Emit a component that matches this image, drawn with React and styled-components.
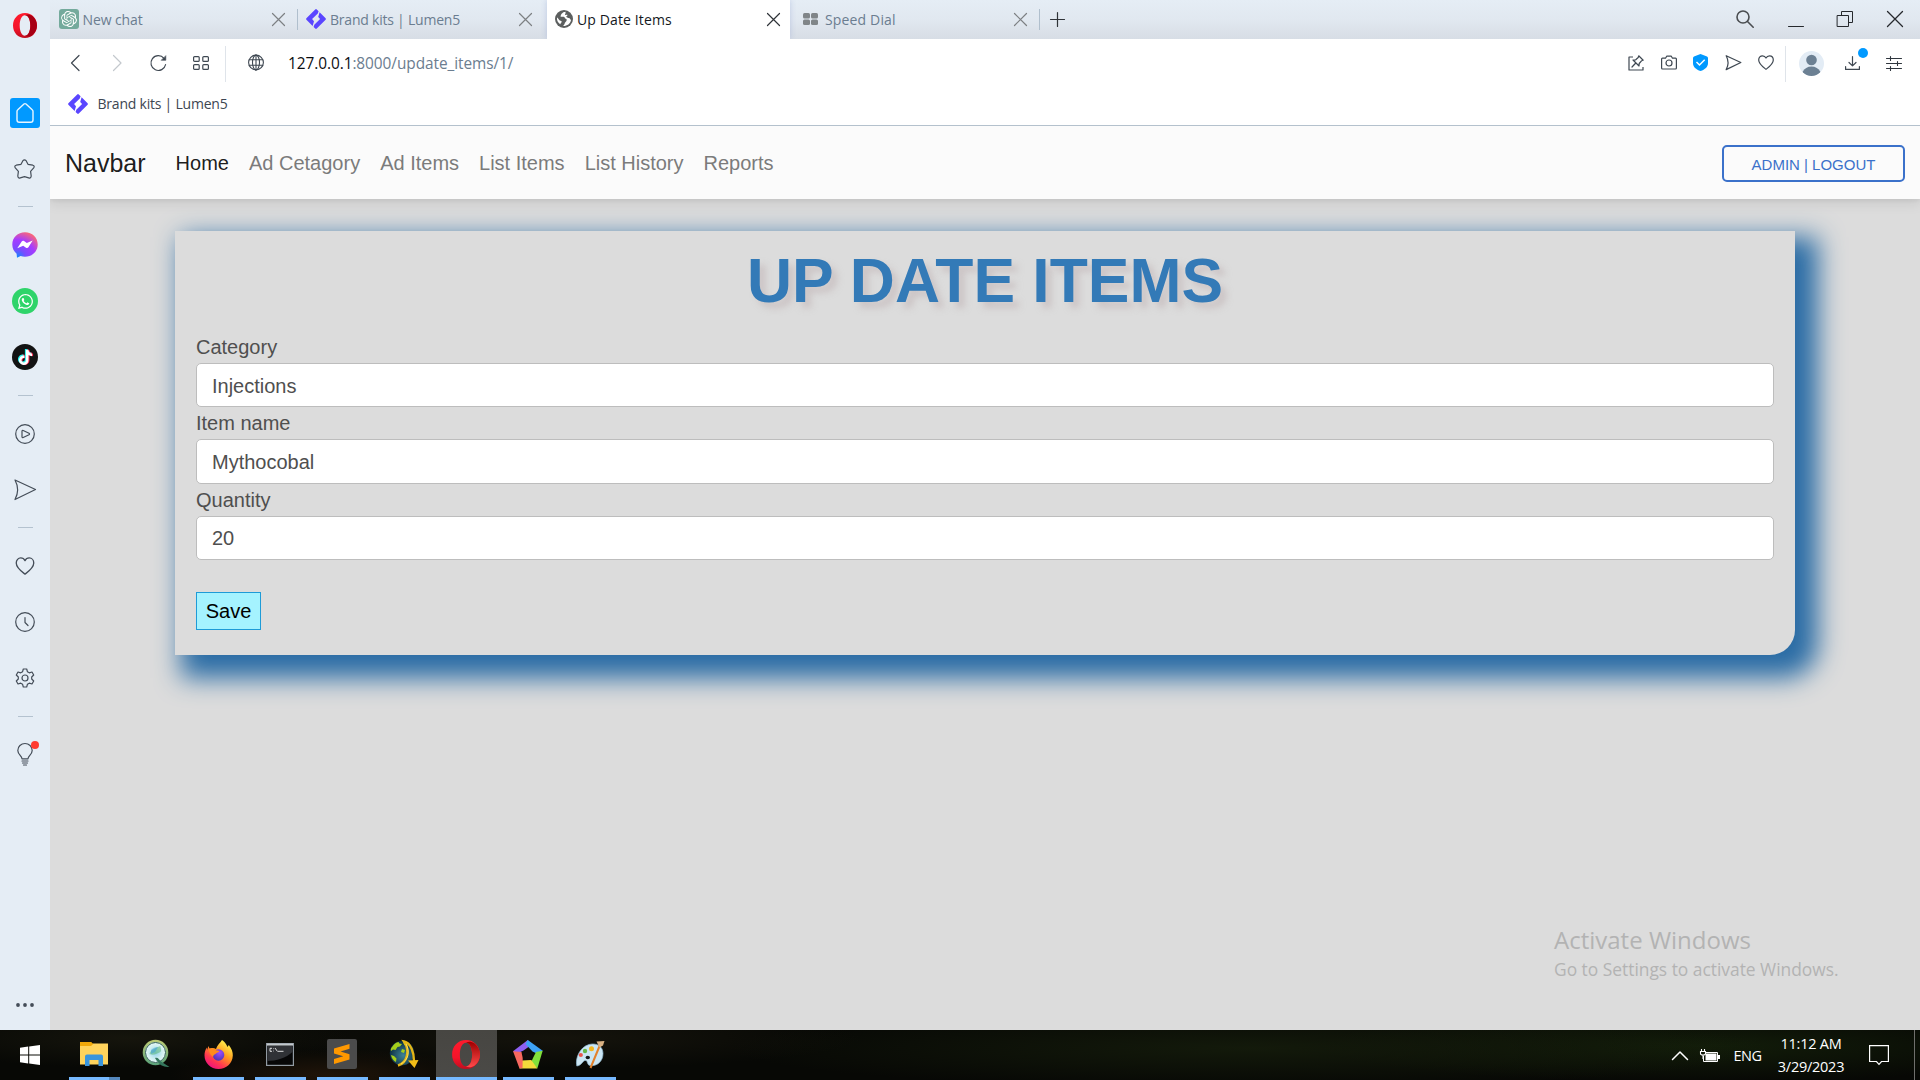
import React from "react";
import styled, { createGlobalStyle, css } from "styled-components";
import { SiOpenai } from "react-icons/si";
import { FaWhatsapp, FaTiktok } from "react-icons/fa";

const Global = createGlobalStyle`
  *, *::before, *::after { box-sizing: border-box; }
  html, body { margin: 0; padding: 0; height: 100%; overflow: hidden; }
  #root { height: 100%; }
  body { font-family: "Liberation Sans", Arial, sans-serif; }
  svg { display: block; flex: none; overflow: visible; }
`;

const uiFont = css`
  font-family: "Open Sans", "Noto Sans", sans-serif;
`;

const Screen = styled.div`
  width: 1920px;
  height: 1080px;
  display: flex;
  flex-direction: column;
  overflow: hidden;
  background: #dcdcdc;
`;

const Browser = styled.div`
  flex: 1;
  min-height: 0;
  display: flex;
`;

/* ---------- side rail ---------- */

const Rail = styled.aside`
  width: 50px;
  background: #e5edf5;
  display: flex;
  flex-direction: column;
  align-items: center;
`;

const RailLogo = styled.div`
  height: 84.5px;
  width: 100%;
  padding: 13px 0 0 13px;
`;

const RailSlot = styled.div`
  width: 50px;
  height: 56px;
  display: flex;
  align-items: center;
  justify-content: center;
  position: relative;
`;

const LineSlot = styled(RailSlot)`
  padding-right: 1px;
`;

const HomeTile = styled.div`
  width: 30px;
  height: 30px;
  border-radius: 3px;
  background: #0199ff;
  display: flex;
  align-items: center;
  justify-content: center;
`;

const RailRule = styled.div`
  height: 20.5px;
  width: 15px;
  display: flex;
  align-items: center;
  &::after {
    content: "";
    flex: 1;
    height: 1px;
    background: #b4c2cf;
  }
`;

const AppBubble = styled.div`
  width: 26px;
  height: 26px;
  border-radius: 50%;
  background: ${(p) => p.$bg};
  color: #fff;
  display: flex;
  align-items: center;
  justify-content: center;
`;

const TikTokGlyph = styled(FaTiktok)`
  width: 15px;
  height: 15px;
  filter: drop-shadow(-1px -0.5px 0 #25f4ee) drop-shadow(1px 0.5px 0 #fe2c55);
`;

const RedDot = styled.span`
  position: absolute;
  left: 31px;
  top: 14px;
  width: 8px;
  height: 8px;
  border-radius: 50%;
  background: #ff3b30;
`;

const RailMore = styled.div`
  margin-top: auto;
  height: 50px;
  display: flex;
  align-items: center;
`;

/* ---------- browser chrome ---------- */

const Main = styled.div`
  flex: 1;
  min-width: 0;
  display: flex;
  flex-direction: column;
`;

const TabStrip = styled.div`
  height: 39px;
  display: flex;
  align-items: stretch;
  background: linear-gradient(#e5edf5 0%, #e1e8f0 50%, #d7dde5 100%);
`;

const Tab = styled.div`
  ${uiFont}
  width: ${(p) => p.$w}px;
  display: flex;
  align-items: center;
  padding: 0 ${(p) => p.$pr}px 1px ${(p) => p.$pl}px;
  font-size: 14px;
  letter-spacing: ${(p) => p.$ls || "-0.22px"};
  color: ${(p) => (p.$active ? "#14181d" : "#6b7d90")};
  background: ${(p) => (p.$active ? "#fff" : "transparent")};
  box-shadow: ${(p) => (p.$active ? "0 0 6px rgba(120, 140, 200, 0.35)" : "none")};
  clip-path: ${(p) => (p.$active ? "inset(0 -6px 0 -6px)" : "none")};
  white-space: nowrap;
`;

const TabTitle = styled.span`
  flex: 1;
  margin-left: ${(p) => p.$gap}px;
`;

const TabRule = styled.div`
  width: 1px;
  height: 21px;
  margin-top: 9px;
  background: #b0bfcd;
`;

const NewTab = styled.div`
  width: 34px;
  display: flex;
  align-items: center;
  justify-content: center;
`;

const WindowControls = styled.div`
  margin-left: auto;
  padding: 0 17px 1px 0;
  display: flex;
  align-items: center;
  gap: 33.6px;
`;

const OpenAiBadge = styled.div`
  width: 20px;
  height: 20px;
  border-radius: 3px;
  background: #74aa9c;
  color: #fff;
  display: flex;
  align-items: center;
  justify-content: center;
`;

const AddressBar = styled.div`
  height: 49px;
  background: #fff;
  display: flex;
  align-items: center;
  padding: 0 18px 1px 20px;
`;

const NavIcons = styled.div`
  display: flex;
  align-items: center;
  gap: 26px;
  padding-right: 16px;
`;

const BarRule = styled.div`
  width: 1px;
  height: 36px;
  margin: 1px ${(p) => p.$mr || 0}px 0 ${(p) => p.$ml || 0}px;
  background: #dfe4ea;
`;

const Url = styled.div`
  ${uiFont}
  margin-left: 24px;
  font-size: 15.4px;
  letter-spacing: -0.06px;
  color: #6b7d90;
  b {
    font-weight: 400;
    color: #0b0d10;
  }
`;

const SiteGlobe = styled.div`
  margin-left: 22px;
`;

const BarActions = styled.div`
  margin-left: auto;
  display: flex;
  align-items: center;
  gap: 16.5px;
  padding-bottom: 1px;
`;

const BarEnd = styled.div`
  display: flex;
  align-items: center;
  margin-left: 21px;
  gap: 20px;
`;

const Download = styled.div`
  position: relative;
  padding-right: 6px;
`;

const BlueDot = styled.span`
  position: absolute;
  left: 13px;
  top: -8px;
  width: 10px;
  height: 10px;
  border-radius: 50%;
  background: #0199ff;
`;

const Bookmarks = styled.div`
  ${uiFont}
  height: 38px;
  background: #fff;
  border-bottom: 1px solid #b4c1cd;
  display: flex;
  align-items: center;
  gap: 9.5px;
  padding: 0 0 6px 18px;
  font-size: 14px;
  letter-spacing: -0.22px;
  color: #3d4652;
`;

/* ---------- web page ---------- */

const Page = styled.div`
  flex: 1;
  min-height: 0;
  display: flex;
  flex-direction: column;
  background: #dcdcdc;
  position: relative;
  overflow: hidden;
`;

const Navbar = styled.nav`
  height: 73px;
  flex: none;
  display: flex;
  align-items: center;
  padding: 0 15px;
  background: #fbfbfb;
  box-shadow: 0 5px 12px rgba(0, 0, 0, 0.08), 0 2px 4px rgba(0, 0, 0, 0.05);
  position: relative;
`;

const Brand = styled.a`
  font-size: 25px;
  line-height: 38px;
  color: rgba(0, 0, 0, 0.9);
  margin-right: 20px;
`;

const NavLink = styled.a`
  padding: 0 10px;
  font-size: 20px;
  line-height: 30px;
  color: ${(p) => (p.$active ? "rgba(0,0,0,0.9)" : "#7b7b7b")};
`;

const Logout = styled.button`
  margin-left: auto;
  width: 183px;
  height: 37px;
  margin-top: 2px;
  padding: 1px 0 0;
  border: 2px solid #3b71ca;
  border-radius: 5px;
  background: transparent;
  font: 400 15px "Liberation Sans", Arial, sans-serif;
  color: #3b71ca;
`;

const Card = styled.form`
  margin: 32px 125px 0;
  height: 424px;
  padding: 0 21px;
  background: #dcdcdc;
  border-radius: 0 0 25px 0;
  box-shadow: 14.5px 14.5px 26px 8px #2a6ca5;
  display: flex;
  flex-direction: column;
  color: #4f4f4f;
`;

const Title = styled.h1`
  margin: 0;
  height: 100px;
  line-height: 99px;
  text-align: center;
  font-size: 62.4px;
  font-weight: 700;
  color: #337ab7;
  text-shadow: 6px 6px 6px rgba(190, 175, 178, 0.5);
`;

const Label = styled.label`
  height: 32px;
  line-height: 32px;
  font-size: 20px;
`;

const Input = styled.input`
  height: 44.4px;
  width: 1578px;
  padding: 2px 15px 0;
  border: 1px solid #bdbdbd;
  border-radius: 5px;
  background: #fff;
  font: 400 20px "Liberation Sans", Arial, sans-serif;
  color: #4f4f4f;
  outline: none;
`;

const Save = styled.button`
  align-self: flex-start;
  margin-top: 31.8px;
  width: 65px;
  height: 38px;
  padding: 1px 0 0;
  border: 1px solid #1e9bd7;
  background: #a5f3ff;
  font: 400 20px "Liberation Sans", Arial, sans-serif;
  color: #000;
`;

const Activate = styled.div`
  ${uiFont}
  position: absolute;
  left: 1504px;
  top: 797px;
  color: #b3b3b3;
  white-space: nowrap;
`;

const ActivateTitle = styled.div`
  font-size: 24px;
  line-height: 34px;
`;

const ActivateText = styled.div`
  font-size: 17.4px;
  line-height: 25px;
  letter-spacing: -0.01px;
`;

/* ---------- taskbar ---------- */

const Taskbar = styled.div`
  height: 50px;
  display: flex;
  align-items: stretch;
  background:
    radial-gradient(ellipse 160px 26px at 330px 45px, rgba(52, 30, 12, 0.55), transparent),
    radial-gradient(ellipse 220px 30px at 130px 8px, rgba(36, 34, 20, 0.5), transparent),
    radial-gradient(ellipse 300px 30px at 560px 8px, rgba(34, 30, 18, 0.5), transparent),
    radial-gradient(ellipse 520px 40px at 1250px 18px, rgba(22, 30, 12, 0.8), transparent),
    radial-gradient(ellipse 380px 36px at 1700px 16px, rgba(20, 32, 10, 0.85), transparent),
    #070805;
`;

const Start = styled.div`
  width: 63px;
  padding: 15px 0 0 20px;
`;

const Task = styled.div`
  width: 62px;
  padding: 0 ${(p) => (p.$active ? "0" : "5px")} 0 ${(p) => (p.$active ? "1px" : "6px")};
  display: flex;
  flex-direction: column;
  align-items: center;
  background: ${(p) => (p.$active ? "linear-gradient(#474642, #4b4a47)" : "transparent")};
  background-clip: content-box;
`;

const TaskIcon = styled.div`
  flex: 1;
  display: flex;
  align-items: center;
  justify-content: center;
  padding: 1px 1px 0 0;
`;

const Running = styled.div`
  width: 100%;
  height: 3px;
  background: ${(p) =>
    p.$stacked ? "linear-gradient(90deg, #76b9ff 40px, #5488bd 40px)" : p.$on ? "#76b9ff" : "transparent"};
`;

const Tray = styled.div`
  ${uiFont}
  margin-left: auto;
  display: flex;
  align-items: center;
  color: #fff;
  font-size: 14.5px;
  padding-right: 5px;
`;

const Battery = styled.svg`
  margin-right: -12px;
`;

const Lang = styled.span`
  margin-left: 13.5px;
  width: 30px;
  letter-spacing: -0.5px;
`;

const Clock = styled.div`
  width: 80px;
  margin-left: 7.5px;
  text-align: center;
  line-height: 23px;
  letter-spacing: -0.25px;
`;

const Notice = styled.div`
  margin-left: 18px;
  padding-right: 25px;
`;

const ShowDesktop = styled.div`
  width: 1px;
  height: 50px;
  background: #6f6f6c;
`;

/* ---------- drawings ---------- */

const Stroke = ({ w, h, vb, color = "#3f4852", sw = 1.2, children }) => (
  <svg width={w} height={h} viewBox={vb || `0 0 ${w} ${h}`} fill="none" stroke={color} strokeWidth={sw} strokeLinecap="round" strokeLinejoin="round">
    {children}
  </svg>
);

const Cross = ({ color, size = 13, sw = 1.2 }) => (
  <Stroke w={size} h={size} color={color} sw={sw}>
    <path d={`M.5.5 L${size - 0.5} ${size - 0.5} M${size - 0.5} .5 L.5 ${size - 0.5}`} />
  </Stroke>
);

const OperaLogo = ({ w = 24, h = 25, id }) => (
  <svg width={w} height={h} viewBox="0 0 24 25">
    <defs>
      <linearGradient id={`${id}a`} x1="0" y1="0" x2="0" y2="1">
        <stop offset="0" stopColor="#ff1b2d" />
        <stop offset=".6" stopColor="#f4142a" />
        <stop offset="1" stopColor="#c00d1f" />
      </linearGradient>
      <linearGradient id={`${id}b`} x1="0" y1="0" x2="0" y2="1">
        <stop offset="0" stopColor="#9c0000" />
        <stop offset="1" stopColor="#ff4b4b" />
      </linearGradient>
    </defs>
    <path fillRule="evenodd" fill={`url(#${id}a)`} d="M12 0C5 0 0 5.5 0 12.500S5 25 12 25s12-5.500 12-12.500S19 0 12 0zm0 2.300c3.300 0 5.300 4.500 5.300 10.200S15.300 22.700 12 22.700 6.700 18.200 6.700 12.500 8.700 2.300 12 2.300z" />
    <path fill={id === "task" ? `url(#${id}b)` : "#a70014"} d="M12 2.300C14 .9 17 1.200 19.500 3 22.300 5.200 24 8.700 24 12.500s-1.700 7.300-4.500 9.500c-2.500 1.800-5.500 2.100-7.500.7 3.300 0 5.300-4.500 5.300-10.200S15.300 2.300 12 2.300z" />
  </svg>
);

const Lumen = () => (
  <svg width="20" height="20" viewBox="0 0 20 20" fill="#5a46ff">
    <path d="M9.200 .4 Q10 -.3 10.800 .4 L12.600 2.200 L11.800 4.600 L6.100 10.100 L8 12.200 L6.600 16.900 L.4 10.700 Q-.3 10 .4 9.300 Z" />
    <path d="M13.600 3.300 L19.600 9.300 Q20.300 10 19.600 10.700 L10.800 19.600 Q10 20.300 9.200 19.600 L7.600 17.900 L8.300 15.700 L14.100 10 L12.200 7.900 Z" />
  </svg>
);

const DarkGlobe = () => (
  <svg width="18" height="18" viewBox="0 0 18 18">
    <circle cx="9" cy="9" r="9" fill="#5c5f5f" />
    <path fill="#fff" d="M10.500 1.800c-3 .2-2.800 1.700-4.300 2.200.3 1.300-.9 1.500-.7 2.600 1.700.7 3.800-.5 4.300 1.200.2 1.500 2.200.6 1.900 2.500-.5 1.500-1.700 2-2.200 3.700-.2.900-.9 1.500-1.500 2 3.600.3 7.500-2 8-6-.8-.5-1-1.700-2.200-1.900-1.300-.1-1.600-1.200-2.800-1.100.4-1 1.500-1 1.500-2-1-.4-1.700.3-2.500-.1.300-1 .8-1.900.5-3.100zM2 7.500c-.3 3 .7 5 3.200 6.700.4-1.200 1.700-1.500 1.500-2.700-.5-1.100-1.800-.9-2.500-1.600-.6-.7-1-1.700-2.200-2.400z" />
  </svg>
);

const DialIcon = () => (
  <svg width="15" height="12" viewBox="0 0 15 12" fill="#808588">
    <rect width="7" height="5.400" rx="1.500" />
    <rect x="8" width="7" height="5.400" rx="1.500" />
    <rect y="6.500" width="7" height="5.400" rx="1.500" />
    <rect x="8" y="6.500" width="7" height="5.400" rx="1.500" />
  </svg>
);

const HeartPath = "M8 14.300 C5 12 .7 9 .7 5 C.7 2.500 2.400 .8 4.500 .8 C6 .8 7.300 1.600 8 3 C8.700 1.600 10 .8 11.500 .8 C13.600 .8 15.300 2.500 15.300 5 C15.300 9 11 12 8 14.300Z";
const SendPath = "M1 1 L21.500 10.500 L1 20.500 C4.500 14 4.500 7.500 1 1Z";

const Messenger = () => (
  <svg width="26" height="26" viewBox="0 0 26 26">
    <defs>
      <radialGradient id="msg" cx=".2" cy="1" r="1.100">
        <stop offset="0" stopColor="#0a8cff" />
        <stop offset=".3" stopColor="#7a4bff" />
        <stop offset=".65" stopColor="#a53cff" />
        <stop offset="1" stopColor="#ff6a70" />
      </radialGradient>
    </defs>
    <path fill="url(#msg)" d="M13 .3C5.800.3.300 5.500.3 12.500c0 3.700 1.600 7 4.300 9.200L5 25.700l3.600-1.600c1.400.4 2.900.6 4.400.6 7.200 0 12.700-5.200 12.700-12.200S20.200.3 13 .3z" />
    <path fill="#fff" d="M5.300 16.200 L9.700 9.400 C10.300 8.600 11.200 8.500 12 9 L14.800 11 L20.700 8.600 L16.400 15.300 C15.800 16.200 14.800 16.300 14 15.700 L11.200 13.700 Z" />
  </svg>
);

const Folder = () => (
  <svg width="28" height="24" viewBox="0 0 28 24">
    <path fill="#e8a200" d="M0 0h11l2.500 2.500V6H0z" />
    <path fill="#ffd35c" d="M0 3.500h11l2-2h15V22.500H0z" />
    <path fill="#f0a80a" d="M0 0h11l2 2-2 2H0z" />
    <path fill="#3a95dc" d="M5 24V14.500a2 2 0 0 1 2-2h14a2 2 0 0 1 2 2V24h-4.500v-6h-9v6z" />
  </svg>
);

const QIcon = () => (
  <svg width="28" height="28" viewBox="0 0 28 28">
    <defs>
      <radialGradient id="qLens" cx=".5" cy=".5" r=".55">
        <stop offset="0" stopColor="#8fd0ea" />
        <stop offset=".5" stopColor="#cdeef0" />
        <stop offset="1" stopColor="#fbfeff" />
      </radialGradient>
      <linearGradient id="qRim" x1="0" y1="0" x2="0" y2="1">
        <stop offset="0" stopColor="#b9c975" />
        <stop offset="1" stopColor="#5da37a" />
      </linearGradient>
    </defs>
    <circle cx="13.500" cy="12.500" r="11.600" fill="url(#qLens)" stroke="url(#qRim)" strokeWidth="2.400" />
    <circle cx="13.500" cy="12.500" r="10" fill="none" stroke="#2f5d55" strokeWidth="1" />
    <path d="M7.500 14c1-4 4-4 6-6l5-2c0 3 2 5-1 6.500-3 1-6 3.500-10 1.500z" fill="#5cb878" opacity=".55" />
    <path d="M9 10c2-2 5-3 7-3l-3 5-4 2z" fill="#3f9edb" opacity=".55" />
    <path d="M13 18c3-1 4 1.500 6 3.500l8.500 5.500c-5 0-8.500-1-11-4.500-1.500-1.500-2.500-2.500-3.500-4.500z" fill="#34765d" />
  </svg>
);

const Firefox = () => (
  <svg width="29" height="29" viewBox="0 0 29 29">
    <defs>
      <linearGradient id="ff" x1=".8" y1=".1" x2=".25" y2=".95">
        <stop offset="0" stopColor="#fff04a" />
        <stop offset=".4" stopColor="#ff9a1f" />
        <stop offset=".75" stopColor="#ff3750" />
        <stop offset="1" stopColor="#f0147b" />
      </linearGradient>
      <radialGradient id="ffb" cx=".6" cy=".3" r=".7">
        <stop offset="0" stopColor="#a04bff" />
        <stop offset="1" stopColor="#4a35b5" />
      </radialGradient>
    </defs>
    <path fill="url(#ff)" d="M18 0c4 3 4.500 5 5.500 7l1.300-2c2.800 3.600 4.200 7 4 10.500C28.500 23.500 22.300 29 14.500 29S.5 23 .5 15.500c0-3 .8-5.700 2.300-8L3 10l1.500-4 1 2.500C8 7.500 10 8 12 9c1-3.500 4-6 6-9z" />
    <circle cx="14.500" cy="15" r="5.800" fill="url(#ffb)" />
    <path fill="#ff8a1c" d="M5 9c3-1.500 6-.5 7.500 1.500 1.800 0 2.500.5 2.800 1.200-1.300 1-3 1-3.800 2.300-1.500.5-2.500 1.500-2.300 3C6.500 15.500 5 12.500 5 9z" />
  </svg>
);

const Terminal = () => (
  <svg width="28" height="23" viewBox="0 0 28 23">
    <rect x=".6" y=".6" width="26.800" height="21.800" fill="#070707" stroke="#929ba3" strokeWidth="1.200" />
    <rect x="1" y=".6" width="26" height="2" fill="#c2c8cc" />
    <path d="M1.500 3h25v6C20 15 10 18 1.500 18z" fill="#303236" />
    <path d="M6 5.300h-2v3h2M7.500 5.500v.6M7.500 7.700v.6M9 5l2.500 3.500M12 8.300h5.500" fill="none" stroke="#eee" strokeWidth=".9" />
  </svg>
);

const Sublime = () => (
  <svg width="30" height="30" viewBox="0 0 30 30">
    <rect width="30" height="30" rx="2" fill="#4b4b4b" />
    <path fill="#ff9800" d="M7 9.500 L22.500 5 V9.800 L13.500 12.500 L22.500 15.300 V20.500 L7 25 V20 L16.300 17.300 L7 14.500 Z" />
  </svg>
);

const IdmGlobe = () => (
  <svg width="30" height="28" viewBox="0 0 30 28">
    <defs>
      <radialGradient id="idm" cx=".55" cy=".6" r=".6">
        <stop offset="0" stopColor="#3d8295" />
        <stop offset="1" stopColor="#0a2c40" />
      </radialGradient>
    </defs>
    <circle cx="13" cy="13" r="12.200" fill="url(#idm)" />
    <path fill="#a4ce1b" d="M3 7c2-3 4-4.500 6.500-5l1 1.500 2.500.5-2 2.500-2.500.5-2 3-2.500-.5-2 1.500c-.5-1.500 0-3 1-4zM2 15l3 1 2.500 2.500-.5 3.500c-2.500-1-4.500-4-5-7zM14 2l3.500 1-2 2.500zM13 9l3 1-1 3-3-1z" />
    <path fill="none" stroke="#e3b516" strokeWidth="2.400" d="M9 25.500 C18 23 21.500 11 15 1.500 C22 3 25 13 25 21" />
    <path fill="#f3bd17" d="M19 20.500 L29.500 20 L25.500 28 Z" />
    <path fill="none" stroke="#ffe260" strokeWidth=".9" d="M12 24 C19 20 21.500 12 17 4" />
  </svg>
);

const Pentagon = () => (
  <svg width="30" height="29" viewBox="0 0 30 29">
    <path fill="#8d5ff2" d="M0 11.300 L14.800 0 L17.500 5.500 L10.500 10.500 L3 14 Z" />
    <path fill="#3da1f5" d="M14.800 0 L29.700 10.800 L26 14.500 L19.500 11.500 L12.500 4 Z" />
    <path fill="#81e03b" d="M29.700 10.800 L24.300 28.500 L18 22.500 L20 18 L23 12 Z" />
    <path fill="#f3db3b" d="M24.300 28.500 L6.500 28.500 L9 20.500 L18.300 20 Z" />
    <path fill="#f7685f" d="M6.500 28.500 L0 11.300 L8.500 12 L9.700 18 L9.500 28 Z" />
    <path fill="#0e0d0b" d="M14.500 9 L20 12.800 L18.300 19.300 L11.500 19.600 L9.500 13.500 Z" />
  </svg>
);

const Paint = () => (
  <svg width="29" height="29" viewBox="0 0 29 29">
    <path fill="#cbe6f4" stroke="#8fb7cf" strokeWidth=".7" d="M.8 26C-1 18 4 7 13 4.500c8-2 14 2 14 9 0 8-6 13-13 12-3-.5-2-4-4-5-3-1-4 5-9.200 5.500z" />
    <ellipse cx="11.800" cy="17.500" rx="2.200" ry="1.800" fill="#15191a" />
    <circle cx="4.800" cy="15" r="2.100" fill="#e9564c" />
    <circle cx="9" cy="11" r="2.200" fill="#66b848" />
    <circle cx="15.500" cy="8.800" r="2.500" fill="#f5b71f" />
    <path d="M24 5 L14.500 28" stroke="#e3812c" strokeWidth="2" />
    <path d="M20.500 1.500 L28.500 1 L27 5.500 L23.500 7.500 Z" fill="#d9b183" />
  </svg>
);

const tasks = [
  { icon: <Folder />, stacked: true },
  { icon: <QIcon /> },
  { icon: <Firefox />, on: true },
  { icon: <Terminal />, on: true },
  { icon: <Sublime />, on: true },
  { icon: <IdmGlobe />, on: true },
  { icon: <OperaLogo id="task" w={28} h={29} />, on: true, active: true },
  { icon: <Pentagon />, on: true },
  { icon: <Paint />, on: true },
];

const links = ["Home", "Ad Cetagory", "Ad Items", "List Items", "List History", "Reports"];
const fields = [
  ["Category", "Injections"],
  ["Item name", "Mythocobal"],
  ["Quantity", "20"],
];

const railInk = "#444d58";

function SideRail() {
  return (
    <Rail>
      <RailLogo><OperaLogo id="rail" /></RailLogo>
      <RailSlot>
        <HomeTile>
          <Stroke w={18} h={20} color="#e9f6ff" sw={1.4}><path d="M1 8.500 Q1 7.500 1.800 6.800 L8 1 Q9 .2 10 1 L16.200 6.800 Q17 7.500 17 8.500 V17 Q17 19.300 14.700 19.300 H3.300 Q1 19.300 1 17 Z" /></Stroke>
        </HomeTile>
      </RailSlot>
      <LineSlot>
        <Stroke w={21} h={20} color={railInk}><path d="M8.900 1.700 Q10.500 -.1 12.100 1.700 L14 5.300 L18.800 6.200 Q21 6.900 19.700 8.900 L16.600 12.300 L17.200 17 Q17 19.600 14.700 18.900 L10.500 17.700 L6.300 18.900 Q4 19.600 3.800 17 L4.400 12.300 L1.300 8.900 Q0 6.900 2.200 6.200 L7 5.300Z" /></Stroke>
      </LineSlot>
      <RailRule />
      <RailSlot><Messenger /></RailSlot>
      <RailSlot><AppBubble $bg="#2fd46a"><FaWhatsapp size={17} /></AppBubble></RailSlot>
      <RailSlot><AppBubble $bg="#131313"><TikTokGlyph /></AppBubble></RailSlot>
      <RailRule />
      <LineSlot>
        <Stroke w={20} h={20} color={railInk}><circle cx="10" cy="10" r="9.300" /><path d="M7 7.200 Q7 6 8.200 6.500 L14 9.200 Q15 10 14 10.800 L8.200 13.500 Q7 14 7 12.800Z" /></Stroke>
      </LineSlot>
      <RailSlot><Stroke w={22} h={21} color={railInk}><path d={SendPath} /></Stroke></RailSlot>
      <RailRule />
      <LineSlot><Stroke w={20} h={18} vb="0 0 16 15" color={railInk} sw={1.1}><path d={HeartPath} /></Stroke></LineSlot>
      <LineSlot>
        <Stroke w={20} h={20} color={railInk}><circle cx="10" cy="10" r="9.300" /><path d="M10 5.500 V10.500 L13 13.500" /></Stroke>
      </LineSlot>
      <LineSlot>
        <Stroke w={20} h={20} color={railInk}>
          <path d="M8.300 1 H11.700 L12.400 3.700 L14.300 4.800 L17 4 L18.700 7 L16.700 9 V11 L18.700 13 L17 16 L14.300 15.200 L12.400 16.300 L11.700 19 H8.300 L7.600 16.300 L5.700 15.200 L3 16 L1.300 13 L3.300 11 V9 L1.300 7 L3 4 L5.700 4.800 L7.600 3.700Z" />
          <circle cx="10" cy="10" r="3" />
        </Stroke>
      </LineSlot>
      <RailRule />
      <RailSlot>
        <Stroke w={16} h={23} color={railInk}>
          <path d="M5 15.800 C5 13 .8 11.500 .8 7.500 A7.200 7 0 0 1 15.200 7.500 C15.200 11.500 11 13 11 15.800Z M5 18 H11 M5.500 20 H10.500 M6.500 22 H9.500" />
        </Stroke>
        <RedDot />
      </RailSlot>
      <RailMore>
        <svg width="18" height="4" viewBox="0 0 18 4" fill="#444d58"><circle cx="2" cy="2" r="1.900" /><circle cx="9" cy="2" r="1.900" /><circle cx="16" cy="2" r="1.900" /></svg>
      </RailMore>
    </Rail>
  );
}

function Chrome() {
  return (
    <>
      <TabStrip>
        <Tab $w={247} $pl={9} $pr={12} $ls="-0.1px">
          <OpenAiBadge><SiOpenai size={16} /></OpenAiBadge>
          <TabTitle $gap={3.5}>New chat</TabTitle>
          <Cross color="#7d8083" />
        </Tab>
        <TabRule />
        <Tab $w={249} $pl={8} $pr={15}>
          <Lumen />
          <TabTitle $gap={4}>Brand kits | Lumen5</TabTitle>
          <Cross color="#7d8083" />
        </Tab>
        <Tab $active $w={243} $pl={8} $pr={10} $ls="0.12px">
          <DarkGlobe />
          <TabTitle $gap={4}>Up Date Items</TabTitle>
          <Cross color="#2f3338" />
        </Tab>
        <Tab $w={249} $pl={13} $pr={12} $ls="0.15px">
          <DialIcon />
          <TabTitle $gap={7}>Speed Dial</TabTitle>
          <Cross color="#7d8083" />
        </Tab>
        <TabRule />
        <NewTab><Stroke w={15} h={15} color="#2f3338"><path d="M7.500 .5V14.500M.5 7.500H14.500" /></Stroke></NewTab>
        <WindowControls>
          <Stroke w={18} h={18} color="#4a4d50" sw={1.6}><circle cx="7" cy="7" r="6" /><path d="M11.500 11.500 L17.200 17.200" /></Stroke>
          <Stroke w={16} h={16} color="#26292d" sw={1}><path d="M.5 15.500H15.500" /></Stroke>
          <Stroke w={16} h={16} color="#26292d" sw={1}><path d="M.5 4.500H11.500V15.500H.5ZM4.500 4.500V.5H15.500V11.500H11.500" /></Stroke>
          <Cross size={16} color="#26292d" sw={1.3} />
        </WindowControls>
      </TabStrip>
      <AddressBar>
        <NavIcons>
          <Stroke w={10} h={16}><path d="M9 .5 L1.500 8 L9 15.500" /></Stroke>
          <Stroke w={18} h={16} color="#c3c8cd"><path d="M7.500 .5 L15 8 L7.500 15.500" /></Stroke>
          <Stroke w={17} h={16}><path d="M15.600 9.500 A7.400 7.400 0 1 1 14 3.300" /><path d="M15.800 1 V5.300 H11.500Z" fill="#3f4852" strokeWidth=".6" /></Stroke>
          <Stroke w={16} h={14}><rect x=".6" y=".6" width="5.600" height="4.800" rx="1" /><rect x="9.800" y=".6" width="5.600" height="4.800" rx="1" /><rect x=".6" y="8.600" width="5.600" height="4.800" rx="1" /><rect x="9.800" y="8.600" width="5.600" height="4.800" rx="1" /></Stroke>
        </NavIcons>
        <BarRule />
        <SiteGlobe>
          <Stroke w={16} h={16} sw={1.1}><circle cx="8" cy="7.500" r="7.400" /><ellipse cx="8" cy="7.500" rx="3.500" ry="7.400" /><path d="M1.300 4.700H14.700M1.300 10.300H14.700M8 .1V14.900" /></Stroke>
        </SiteGlobe>
        <Url><b>127.0.0.1</b>:8000/update_items/1/</Url>
        <BarActions>
          <Stroke w={16} h={16}>
            <path d="M5 2 H1 V15 H15 V12" strokeLinecap="butt" />
            <path d="M10.700 .8 L15.200 5.200 L13.500 5.800 L11.200 8.500 L11 11 L5 5 L7.700 4.800 L10.200 2.500Z M7.800 8 L4 12" />
          </Stroke>
          <Stroke w={16} h={15}><path d="M1.500 3.200 H4.500 L5.700 1.200 H10.300 L11.500 3.200 H14.500 Q15.400 3.200 15.400 4.100 V13 Q15.400 14 14.500 14 H1.500 Q.6 14 .6 13 V4.100 Q.6 3.200 1.500 3.200Z" /><circle cx="8" cy="8" r="3" /></Stroke>
          <svg width="15" height="17" viewBox="0 0 15 17"><path fill="#0199ff" d="M7.500 0 L14 2.500 Q15 3 15 4 V9 C15 13 12 15.500 7.500 17 C3 15.500 0 13 0 9 V4 Q0 3 1 2.500Z" /><path d="M3.500 8 L6.500 11 L11.700 5.800" fill="none" stroke="#fff" strokeWidth="1.500" /></svg>
          <Stroke w={17} h={15} vb="0 0 22.500 21" sw={1.7}><path d={SendPath} /></Stroke>
          <Stroke w={16} h={15}><path d={HeartPath} /></Stroke>
        </BarActions>
        <BarRule $ml={11} $mr={13} />
        <svg width="25" height="25" viewBox="0 0 25 25">
          <clipPath id="av"><circle cx="12.500" cy="12.500" r="12.500" /></clipPath>
          <circle cx="12.500" cy="12.500" r="12.500" fill="#e3ecf5" />
          <circle cx="12.500" cy="9" r="5.300" fill="#6c8093" />
          <path clipPath="url(#av)" fill="#6c8093" d="M3.500 21 Q6.500 15.500 12.500 15.500 T21.500 21 L18 25 H7Z" />
        </svg>
        <BarEnd>
          <Download>
            <Stroke w={15} h={14}><path d="M7.500 .5V9.800M4 6.500 L7.500 9.900 L11 6.500M.6 10.500 V13.400 H14.400 V10.500" /></Stroke>
            <BlueDot />
          </Download>
          <Stroke w={16} h={15} color="#2f363e" sw={1.1}><path d="M.5 2.500H15.500M.5 7.500H15.500M.5 12.500H15.500M4.500 .5V4.500M11.500 5.500V9.500M4.500 10.500V14.500" /></Stroke>
        </BarEnd>
      </AddressBar>
      <Bookmarks><Lumen />Brand kits | Lumen5</Bookmarks>
    </>
  );
}

function WebPage() {
  return (
    <Page>
      <Navbar>
        <Brand>Navbar</Brand>
        {links.map((l, i) => <NavLink key={l} $active={i === 0}>{l}</NavLink>)}
        <Logout>ADMIN | LOGOUT</Logout>
      </Navbar>
      <Card>
        <Title>UP DATE ITEMS</Title>
        {fields.map(([label, value]) => (
          <React.Fragment key={label}>
            <Label>{label}</Label>
            <Input defaultValue={value} />
          </React.Fragment>
        ))}
        <Save type="button">Save</Save>
      </Card>
      <Activate>
        <ActivateTitle>Activate Windows</ActivateTitle>
        <ActivateText>Go to Settings to activate Windows.</ActivateText>
      </Activate>
    </Page>
  );
}

function WinTaskbar() {
  return (
    <Taskbar>
      <Start>
        <svg width="20" height="20" viewBox="0 0 20 20" fill="#fff"><path d="M0 2.800 L8.200 1.600 V9.500 H0ZM9.200 1.500 L20 0 V9.500 H9.200ZM0 10.500 H8.200 V18.400 L0 17.200ZM9.200 10.500 H20 V20 L9.200 18.500Z" /></svg>
      </Start>
      {tasks.map((t, i) => (
        <Task key={i} $active={t.active}>
          <TaskIcon>{t.icon}</TaskIcon>
          <Running $on={t.on} $stacked={t.stacked} />
        </Task>
      ))}
      <Tray>
        <Stroke w={16} h={9} color="#fff" sw={1.5}><path d="M.5 8.500 L8 1 L15.500 8.500" /></Stroke>
        <Battery width="44" height="13" viewBox="0 0 44 13">
          <path d="M17.500 3.500 H29.500 V12.500 H15.500 V7" fill="none" stroke="#fff" />
          <rect x="17.500" y="4.500" width="11" height="7" fill="#fff" />
          <rect x="30" y="6" width="2" height="4" fill="#fff" />
          <path d="M13.500 0V2.500M16.500 0V2.500M12.500 2.500H17.500V4.500Q17.500 6 15 6Q12.500 6 12.500 4.500ZM15 6V10" fill="none" stroke="#fff" strokeWidth="1.100" />
        </Battery>
        <Lang>ENG</Lang>
        <Clock>11:12 AM<br />3/29/2023</Clock>
        <Notice><Stroke w={20} h={20} color="#fff"><path d="M.6 .6H19.400V16.500H12.500L10 19.300L7.500 16.500H.6Z" strokeLinejoin="miter" /></Stroke></Notice>
        <ShowDesktop />
      </Tray>
    </Taskbar>
  );
}

export default function App() {
  return (
    <Screen>
      <Global />
      <Browser>
        <SideRail />
        <Main>
          <Chrome />
          <WebPage />
        </Main>
      </Browser>
      <WinTaskbar />
    </Screen>
  );
}
